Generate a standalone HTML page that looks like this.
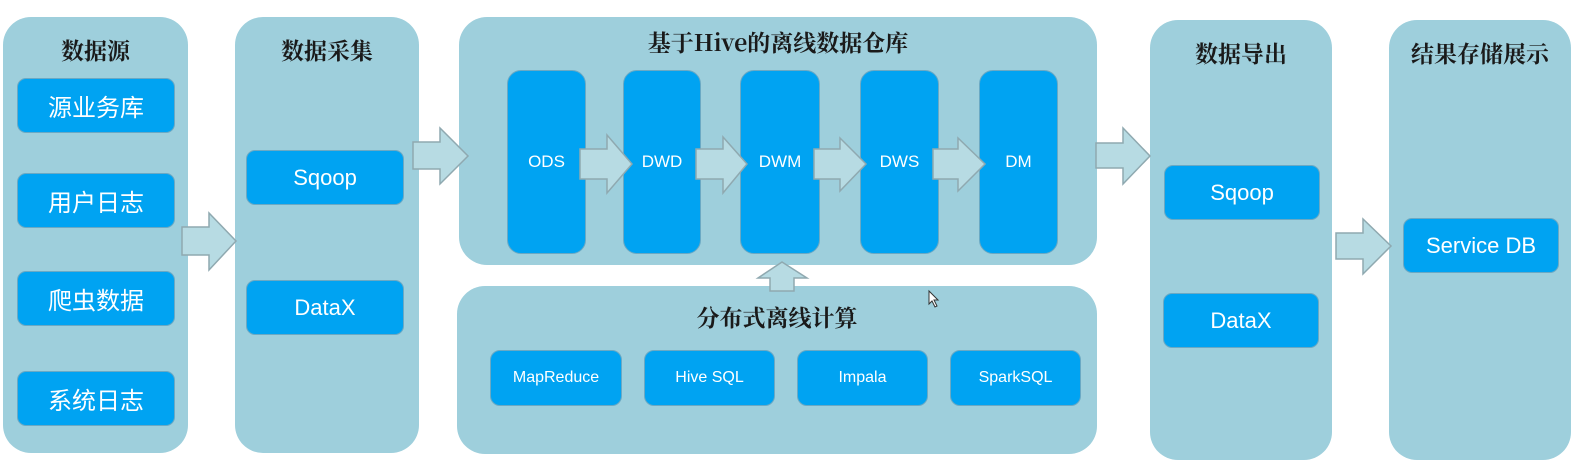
<!DOCTYPE html>
<html><head><meta charset="utf-8"><style>
body{margin:0;width:1589px;height:468px;background:#fff;position:relative;overflow:hidden;font-family:"Liberation Sans","Noto Sans CJK SC",sans-serif}
.p{position:absolute;background:#9ecfdc;border-radius:28px}
.t{position:absolute;left:0;right:0;text-align:center;font-family:"Noto Serif CJK SC","Liberation Serif",serif;font-weight:bold;font-size:23px;color:#1a1a1a}
.b{position:absolute;background:#00a3f2;border:1.5px solid #6aa9c4;border-radius:9px;color:#fff;display:flex;align-items:center;justify-content:center;font-size:22px;box-sizing:border-box}
.z{font-size:24px}
.c{border-radius:14px;font-size:17px}
.s{font-size:16px;border-radius:10px}
svg{position:absolute;left:0;top:0}
</style></head><body>
<div class="p" style="left:3px;top:17px;width:185px;height:436px"><div class="t" style="top:16px">数据源</div></div>
<div class="b z" style="left:17px;top:78px;width:158px;height:55px">源业务库</div>
<div class="b z" style="left:17px;top:173px;width:158px;height:55px">用户日志</div>
<div class="b z" style="left:17px;top:271px;width:158px;height:55px">爬虫数据</div>
<div class="b z" style="left:17px;top:371px;width:158px;height:55px">系统日志</div>

<div class="p" style="left:235px;top:17px;width:184px;height:436px"><div class="t" style="top:16px">数据采集</div></div>
<div class="b" style="left:246px;top:150px;width:158px;height:55px">Sqoop</div>
<div class="b" style="left:246px;top:280px;width:158px;height:55px">DataX</div>

<div class="p" style="left:459px;top:17px;width:638px;height:248px"><div class="t" style="top:8px">基于Hive的离线数据仓库</div></div>
<div class="b c" style="left:507px;top:70px;width:79px;height:184px">ODS</div>
<div class="b c" style="left:623px;top:70px;width:78px;height:184px">DWD</div>
<div class="b c" style="left:740px;top:70px;width:80px;height:184px">DWM</div>
<div class="b c" style="left:860px;top:70px;width:79px;height:184px">DWS</div>
<div class="b c" style="left:979px;top:70px;width:79px;height:184px">DM</div>

<div class="p" style="left:457px;top:286px;width:640px;height:168px"><div class="t" style="top:14px">分布式离线计算</div></div>
<div class="b s" style="left:490px;top:350px;width:132px;height:56px">MapReduce</div>
<div class="b s" style="left:644px;top:350px;width:131px;height:56px">Hive SQL</div>
<div class="b s" style="left:797px;top:350px;width:131px;height:56px">Impala</div>
<div class="b s" style="left:950px;top:350px;width:131px;height:56px">SparkSQL</div>

<div class="p" style="left:1150px;top:20px;width:182px;height:440px"><div class="t" style="top:16px">数据导出</div></div>
<div class="b" style="left:1164px;top:165px;width:156px;height:55px">Sqoop</div>
<div class="b" style="left:1163px;top:293px;width:156px;height:55px">DataX</div>

<div class="p" style="left:1389px;top:20px;width:182px;height:440px"><div class="t" style="top:16px">结果存储展示</div></div>
<div class="b" style="left:1403px;top:218px;width:156px;height:55px">Service DB</div>

<svg width="1589" height="468" style="pointer-events:none">
<g fill="#b7dbe3" stroke="#8fa9b0" stroke-width="1.5">
<polygon points="182,227 209,227 209,213 236,241 209,270 209,255 182,255"/>
<polygon points="413,142 440,142 440,128 468,156 440,184 440,169 413,169"/>
<polygon points="1096,143 1123,143 1123,128 1150,156 1123,184 1123,168 1096,168"/>
<polygon points="1336,233 1363,233 1363,219 1391,246 1363,274 1363,259 1336,259"/>
<polygon points="580,149 607,149 607,135 632,164 607,193 607,179 580,179"/>
<polygon points="696,149 723,149 723,137 747,164 723,193 723,179 696,179"/>
<polygon points="814,149 840,149 840,138 866,164 840,191 840,179 814,179"/>
<polygon points="933,149 958,149 958,138 985,164 958,191 958,179 933,179"/>
<polygon points="770,291 770,278 758,278 782,262 807,278 794,278 794,291"/>
</g>
<path d="M929 291 v13 l3-3 3 6 2-1-3-6 4 0z" fill="#fff" stroke="#333" stroke-width="1"/>
</svg>
</body></html>
